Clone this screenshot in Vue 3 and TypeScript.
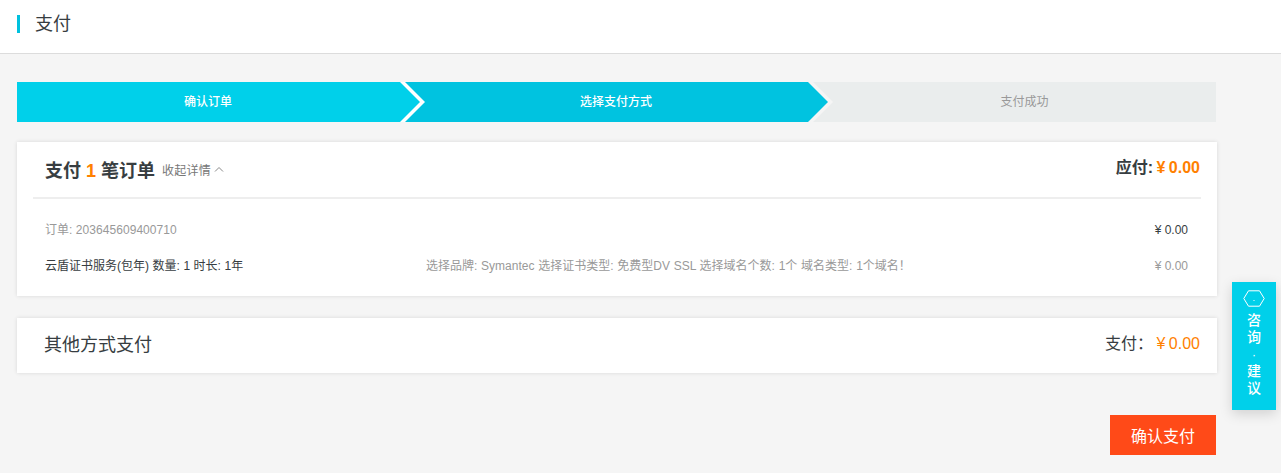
<script setup lang="ts">
const steps = ['确认订单', '选择支付方式', '支付成功']
</script>

<template>
  <div class="page">
    <header class="top"><h1 class="top-title">支付</h1></header>
    <main class="main">
      <div class="steps">
        <div v-for="(s, i) in steps" :key="s" class="step" :class="'step-' + i">{{ s }}</div>
      </div>

      <section class="card order">
        <div class="order-head">
          <div class="order-title">
            <strong class="big">支付 <em class="num">1</em> 笔订单</strong>
            <span class="toggle">收起详情
              <svg class="chev" width="10" height="6" viewBox="0 0 10 6"><path d="M1 5.5 5 1.5l4 4" fill="none" stroke="#888" stroke-width="1" /></svg>
            </span>
          </div>
          <div class="due">应付: <span class="due-num">¥ 0.00</span></div>
        </div>
        <div class="row row-id">
          <span class="grey order-no">订单: 203645609400710</span>
          <span class="amount dark">¥ 0.00</span>
        </div>
        <div class="row row-item">
          <span class="item-name">云盾证书服务(包年) 数量: 1 时长: 1年</span>
          <span class="item-desc grey">选择品牌: Symantec 选择证书类型: 免费型DV SSL 选择域名个数: 1个 域名类型: 1个域名！</span>
          <span class="amount grey">¥ 0.00</span>
        </div>
      </section>

      <section class="card other">
        <div class="other-title">其他方式支付</div>
        <div class="other-pay">支付： <span class="other-num">¥ 0.00</span></div>
      </section>

      <div class="actions"><button class="pay" type="button">确认支付</button></div>
    </main>

    <aside class="float">
      <svg width="22" height="17" viewBox="0 0 22 17"><path d="M5.5.8h11l4.7 7.7-4.7 7.7h-11L.8 8.5Z" fill="none" stroke="#fff" stroke-width="1" /><rect x="10.5" y="10" width="1" height="1" fill="#fff" /></svg>
      <span>咨</span><span>询</span><span class="dot">·</span><span>建</span><span>议</span>
    </aside>
  </div>
</template>

<style>
html, body { margin: 0; background: #f5f5f5; }
</style>

<style scoped>
.page {
  position: relative;
  height: 473px;
  overflow: hidden;
  background: #f5f5f5;
  font-family: "Liberation Sans", "Noto Sans CJK SC", sans-serif;
  font-size: 12px;
  color: #333;
}
.top {
  height: 38px;
  background: #fff;
  border-bottom: 1px solid #dcdcdc;
  padding: 15px 0 0 17px;
  box-sizing: content-box;
}
.top-title {
  margin: 0;
  height: 18px;
  line-height: 18px;
  border-left: 3px solid #00c1de;
  padding-left: 15px;
  font-size: 18px;
  font-weight: 400;
  color: #373d41;
}
.main { padding: 28px 64px 0 17px; }
.steps { display: flex; width: 1199px; height: 40px; }
.step {
  position: relative;
  height: 40px;
  line-height: 40px;
  text-align: center;
  box-sizing: border-box;
}
.step-0 { width: 383px; padding-right: 1px; background: #00d0ea; color: #fff; font-weight: 500; z-index: 2; }
.step-1 { width: 408px; padding-left: 24px; background: #00c3e0; color: #fff; font-weight: 500; z-index: 1; }
.step-2 { width: 408px; padding-left: 25px; background: #eaeded; color: #999; }
.step-0::before, .step-1::before {
  content: "";
  position: absolute;
  left: 100%;
  top: 0;
  width: 25px;
  height: 40px;
  background: #fff;
  clip-path: polygon(0 0, 5px 0, 25px 50%, 5px 100%, 0 100%);
}
.step-1::before { background: #f5f5f5; }
.step-0::after, .step-1::after {
  content: "";
  position: absolute;
  left: 100%;
  top: 0;
  width: 20px;
  height: 40px;
  clip-path: polygon(0 0, 20px 50%, 0 100%);
}
.step-0::after { background: #00d0ea; }
.step-1::after { background: #00c3e0; }

.card {
  width: 1200px;
  background: #fff;
  box-shadow: 0 0 4px rgba(0, 0, 0, .12);
}
.order { margin-top: 20px; height: 154px; box-sizing: border-box; padding: 0 16px; }
.order-head {
  height: 54px;
  border-bottom: 2px solid #eee;
  display: flex;
  justify-content: space-between;
  align-items: center;
  padding: 0 0 1px 12px;
  box-sizing: content-box;
}
.order-title { display: flex; align-items: center; gap: 7px; }
.big { font-size: 18px; font-weight: 700; color: #373d41; }
.num { font-style: normal; color: #ff8000; }
.toggle { color: #777; margin-top: 1px; display: flex; align-items: center; gap: 3px; letter-spacing: .2px; }
.chev { margin-top: -2px; }
.due { font-size: 16px; font-weight: 700; color: #373d41; margin: -6px 1px 0 0; word-spacing: -1px; }
.due-num { color: #ff8000; }

.row { display: flex; align-items: center; padding: 0 13px 0 12px; }
.row-id { justify-content: space-between; margin-top: 19px; height: 20px; }
.row-item { margin-top: 16px; height: 20px; }
.order-no { letter-spacing: .05px; }
.item-name { width: 381px; color: #373d41; word-spacing: .2px; }
.item-desc { flex: 1; word-spacing: .4px; }
.amount { padding-top: 4px; }
.grey { color: #999; }
.dark { color: #373d41; }

.other {
  margin-top: 22px;
  height: 55px;
  display: flex;
  justify-content: space-between;
  align-items: center;
  padding: 0 17px 6px 27px;
  box-sizing: border-box;
}
.other-title { font-size: 18px; color: #373d41; }
.other-pay { font-size: 16px; color: #373d41; margin-top: -2px; word-spacing: -1px; }
.other-num { font-size: 16px; color: #ff8000; }

.actions { display: flex; justify-content: flex-end; width: 1199px; margin-top: 42px; }
.pay {
  width: 106px;
  height: 40px;
  border: 0;
  padding: 0;
  background: #ff4a18;
  color: #fff;
  font: inherit;
  font-size: 16px;
}

.float {
  position: absolute;
  left: 1232px;
  top: 282px;
  width: 44px;
  height: 128px;
  box-sizing: border-box;
  padding-top: 8px;
  display: flex;
  flex-direction: column;
  align-items: center;
  background: #00d0ea;
  color: #fff;
  font-size: 14px;
  font-weight: 500;
  line-height: 17px;
  box-shadow: 0 4px 12px rgba(0, 0, 0, .15);
}
.float svg { margin-bottom: 5px; }
.float .dot { height: 17px; font-weight: 400; font-size: 12px; line-height: 19px; }
</style>
